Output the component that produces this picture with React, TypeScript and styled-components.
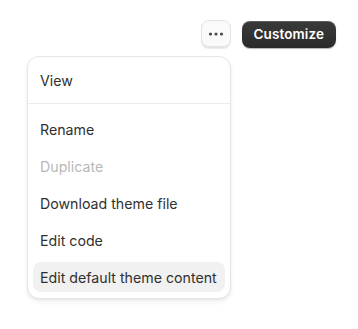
import React from "react";
import styled, { createGlobalStyle } from "styled-components";

const Global = createGlobalStyle`
  html, body { margin: 0; padding: 0; background: #ffffff; }
  body { font-family: Inter, "Noto Sans", sans-serif; -webkit-font-smoothing: antialiased; }
`;

const Page = styled.div`
  width: 358px;
  height: 329px;
  box-sizing: border-box;
  padding: 20px 22px 0 27px;
  display: flex;
  flex-direction: column;
  align-items: flex-start;
`;

const Toolbar = styled.div`
  align-self: flex-end;
  display: flex;
  align-items: center;
  gap: 11px;
`;

const Anchor = styled.div`
  display: flex;
  flex-direction: column;
  align-items: flex-end;
  width: 100%;
`;

const DotsButton = styled.button`
  width: 30px;
  height: 28px;
  box-sizing: border-box;
  border: 1px solid #e3e3e3;
  border-radius: 8px;
  background: #fafafa;
  box-shadow: 0 1px 0 rgba(0, 0, 0, 0.08), inset 0 -1px 0 #e6e6e6;
  display: flex;
  align-items: center;
  justify-content: center;
  padding: 0;
`;

const Customize = styled.button`
  height: 27px;
  box-sizing: border-box;
  padding: 0 12px;
  border: none;
  border-radius: 8px;
  background: linear-gradient(180deg, #3a3a3a 0%, #2a2a2a 100%);
  box-shadow: inset 0 1px 0 rgba(255, 255, 255, 0.18), 0 1px 1px rgba(0, 0, 0, 0.3);
  color: #ffffff;
  font-family: Inter, "Noto Sans", sans-serif;
  font-size: 13.5px;
  font-weight: 600;
  letter-spacing: 0.1px;
`;

const Row = styled.div`
  display: flex;
  width: 100%;
  justify-content: flex-end;
`;

const Menu = styled.div`
  align-self: flex-start;
  margin-top: 8px;
  width: 204px;
  box-sizing: border-box;
  border: 1px solid #e6e6e6;
  border-radius: 12px;
  background: #ffffff;
  box-shadow: 0 3px 5px rgba(0, 0, 0, 0.06), 0 1px 2px rgba(0, 0, 0, 0.05);
  overflow: hidden;
`;

const Section = styled.div<{ $top: number; $bottom: number; $divider?: boolean }>`
  display: flex;
  flex-direction: column;
  gap: 7px;
  padding: ${(p) => p.$top}px 5px ${(p) => p.$bottom}px 5px;
  border-bottom: ${(p) => (p.$divider ? "1px solid #ebebeb" : "none")};
`;

const Item = styled.div<{ $disabled?: boolean; $active?: boolean; $h?: number }>`
  height: ${(p) => p.$h ?? 30}px;
  display: flex;
  align-items: center;
  padding: 0 7px;
  border-radius: 8px;
  background: ${(p) => (p.$active ? "#f1f1f1" : "transparent")};
  color: ${(p) => (p.$disabled ? "#b8b8b8" : "#303030")};
  font-size: 14.2px;
  font-weight: 400;
  white-space: nowrap;
`;

export default function App() {
  return (
    <>
      <Global />
      <Page>
        <Anchor>
          <Row>
            <Toolbar>
              <DotsButton aria-label="More actions">
                <svg width="16" height="4" viewBox="0 0 16 4">
                  <circle cx="2.5" cy="2" r="1.6" fill="#4a4a4a" />
                  <circle cx="8" cy="2" r="1.6" fill="#4a4a4a" />
                  <circle cx="13.5" cy="2" r="1.6" fill="#4a4a4a" />
                </svg>
              </DotsButton>
              <Customize>Customize</Customize>
            </Toolbar>
          </Row>
        </Anchor>
        <Menu>
          <Section $top={7} $bottom={7} $divider>
            <Item $h={32}>View</Item>
          </Section>
          <Section $top={10} $bottom={6}>
            <Item>Rename</Item>
            <Item $disabled>Duplicate</Item>
            <Item>Download theme file</Item>
            <Item>Edit code</Item>
            <Item $active>Edit default theme content</Item>
          </Section>
        </Menu>
      </Page>
    </>
  );
}
